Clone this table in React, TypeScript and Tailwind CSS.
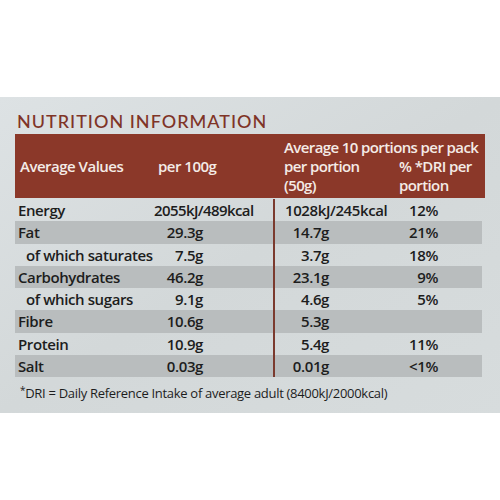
const rows = [
  { label: "Energy", per100: "2055kJ/489kcal", portion: "1028kJ/245kcal", dri: "12%", shade: false, indent: false },
  { label: "Fat", per100: "29.3g", portion: "14.7g", dri: "21%", shade: true, indent: false },
  { label: "of which saturates", per100: "7.5g", portion: "3.7g", dri: "18%", shade: false, indent: true },
  { label: "Carbohydrates", per100: "46.2g", portion: "23.1g", dri: "9%", shade: true, indent: false },
  { label: "of which sugars", per100: "9.1g", portion: "4.6g", dri: "5%", shade: false, indent: true },
  { label: "Fibre", per100: "10.6g", portion: "5.3g", dri: "", shade: true, indent: false },
  { label: "Protein", per100: "10.9g", portion: "5.4g", dri: "11%", shade: false, indent: false },
  { label: "Salt", per100: "0.03g", portion: "0.01g", dri: "<1%", shade: true, indent: false },
];

export default function App() {
  return (
    <div className="w-[500px] h-[500px] bg-white flex flex-col font-['Open_Sans','Noto_Sans',sans-serif]">
      <div className="h-[97px]" />
      {/* label panel */}
      <div className="h-[316px] bg-gradient-to-br from-[#dde2e4] via-[#d3d8d9] to-[#d7dcdd] flex flex-col px-[15px] pt-[12px]">
        <h1 className="ml-[2px] h-[25px] text-[18px] leading-[25px] tracking-[1px] text-[#7f3427] font-['Lato',sans-serif] font-medium">
          NUTRITION INFORMATION
        </h1>

        {/* header band */}
        <div className="h-[64px] bg-[#8b3829] flex text-[#f4ebe6] font-semibold text-[15px] leading-[19px] tracking-[-0.5px]">
          <div className="w-[258px] flex items-center pl-[5px]">
            <span className="w-[138px]">Average Values</span>
            <span>per 100g</span>
          </div>
          <div className="flex-1 flex flex-col pl-[11px] pt-[4px] tracking-[-0.6px]">
            <span>Average 10 portions per pack</span>
            <div className="flex">
              <div className="w-[115px] flex flex-col">
                <span>per portion</span>
                <span>(50g)</span>
              </div>
              <div className="flex flex-col">
                <span>% *DRI per</span>
                <span>portion</span>
              </div>
            </div>
          </div>
        </div>

        {/* rows */}
        <div className="flex flex-col pt-[1px] text-[15px] font-semibold text-[#1d1d1d] tracking-[-0.4px]">
          {rows.map((r) => (
            <div
              key={r.label}
              className={`h-[22.3px] flex items-center w-[467px] ${r.shade ? "bg-[#b9bdbe]" : ""}`}
            >
              {r.label === "Energy" ? (
                <div className="w-[258px] h-full flex items-center">
                  <span className="w-[139px] pl-[3px]">{r.label}</span>
                  <span className="whitespace-nowrap tracking-[-0.6px]">{r.per100}</span>
                </div>
              ) : (
                <div className="w-[258px] h-full flex items-center pr-[70px]">
                  <span className={`flex-1 ${r.indent ? "pl-[11px]" : "pl-[3px]"}`}>{r.label}</span>
                  <span className="whitespace-nowrap">{r.per100}</span>
                </div>
              )}
              <div className="h-full w-[2px] bg-[#7b3a2e]" />
              {r.label === "Energy" ? (
                <span className="w-[110px] pl-[10px] whitespace-nowrap">{r.portion}</span>
              ) : (
                <span className="w-[110px] pr-[56px] text-right">{r.portion}</span>
              )}
              <span className="w-[53px] text-right">{r.dri}</span>
            </div>
          ))}
        </div>

        <p className="mt-[8px] pl-[5px] text-[13px] leading-[16px] text-[#1d1d1d] tracking-[-0.3px]">
          <span className="align-top text-[10px] leading-[10px]">*</span>DRI = Daily Reference Intake of average adult (8400kJ/2000kcal)
        </p>
      </div>
    </div>
  );
}
